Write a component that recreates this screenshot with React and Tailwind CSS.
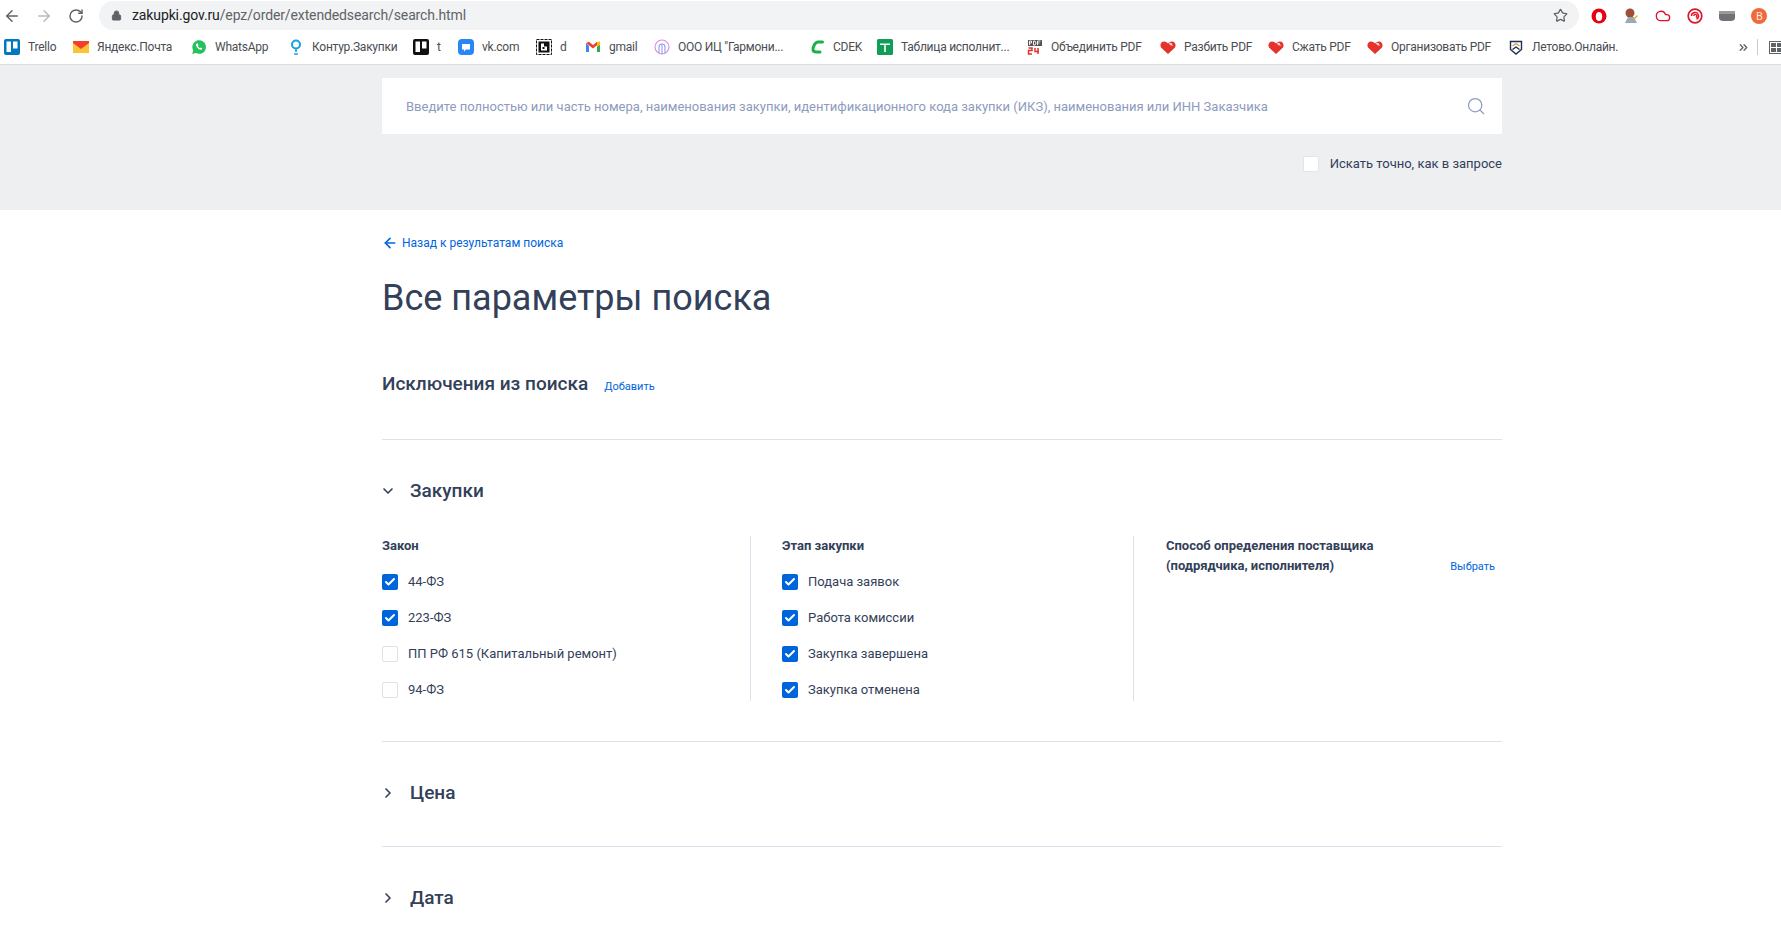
import React from 'react';
import { ArrowLeft, ArrowRight, RotateCw, Lock, Star, Search, ChevronDown, ChevronRight, Check, ChevronsRight, Cloud } from 'lucide-react';

// favicons of the bookmarks bar
const TrelloIcon = ({ bg = '#0079bf' }) => (
    <svg width="16" height="16" viewBox="0 0 16 16">
        <rect width="16" height="16" rx="2" fill={bg} />
        <rect x="2.5" y="2.5" width="4.5" height="10.5" fill="#fff" />
        <rect x="9" y="2.5" width="4.5" height="7" fill="#fff" />
    </svg>
);

const YandexMail = () => (
    <svg width="16" height="16" viewBox="0 0 16 16">
        <rect y="2" width="16" height="12" fill="#fcc433" />
        <path d="M0 2h16v2l-8 6-8-6z" fill="#f0402b" />
    </svg>
);

const WhatsApp = () => (
    <svg width="16" height="16" viewBox="0 0 16 16">
        <path d="M1.2 15l1-3.6A6.8 6.8 0 1 1 4.8 14z" fill="#25c15b" />
        <path d="M5.6 4.5c-1 .7-1 2 .2 3.6 1.2 1.7 2.8 2.9 4.3 2.6.8-.2 1.2-.8 1.1-1.4L9.8 8.4l-.8.8c-.8-.3-1.7-1.2-2.1-2.1l.7-.8-.8-1.8z" fill="#fff" />
    </svg>
);

const KonturIcon = () => (
    <svg width="16" height="16" viewBox="0 0 16 16" fill="none" stroke="#1a9fe0">
        <circle cx="8" cy="5.5" r="4" strokeWidth="2" />
        <path d="M8 10v3M6 15h4" strokeWidth="1.6" />
    </svg>
);

const VkChat = () => (
    <svg width="16" height="16" viewBox="0 0 16 16">
        <rect width="16" height="16" rx="4" fill="#2787f5" />
        <path d="M4 5h8v5.5H8l-2 2v-2H4z" fill="#fff" />
    </svg>
);

const DIcon = () => (
    <svg width="16" height="16" viewBox="0 0 16 16">
        <rect x="0.5" y="0.5" width="15" height="15" fill="#fff" stroke="#111" strokeDasharray="3 1" />
        <rect x="2.5" y="2.5" width="11" height="11" fill="#111" />
        <path d="M5 4.5h3v3h3v4H5z" fill="#fff" />
        <path d="M6.5 8h2v2h-2z" fill="#111" />
    </svg>
);

const Gmail = () => (
    <svg width="16" height="16" viewBox="0 0 16 16">
        <path d="M1 4v9h3V7z" fill="#4285f4" />
        <path d="M15 4v9h-3V7z" fill="#34a853" />
        <path d="M1 4l7 5.5L15 4l-3-1.2L8 6 4 2.8z" fill="#ea4335" />
        <path d="M12 3l3-.5V6l-3 2z" fill="#fbbc04" />
    </svg>
);

const GarmonyIcon = () => (
    <svg width="16" height="16" viewBox="0 0 16 16" fill="none" strokeWidth="1.1">
        <circle cx="8" cy="8" r="7" stroke="#d98be0" />
        <path d="M5 14V8a3 3 0 0 1 6 0v6" stroke="#8b9cf0" />
        <path d="M8 5v10" stroke="#8b9cf0" />
    </svg>
);

const Cdek = () => (
    <svg width="16" height="16" viewBox="0 0 16 16" fill="none">
        <path d="M13.5 3H9C6 3 4 8 4 10.5c0 2 1.500 2.500 3.500 2.500H11" stroke="#1ab248" strokeWidth="3" strokeLinecap="round" />
    </svg>
);

const SheetIcon = () => (
    <svg width="16" height="16" viewBox="0 0 16 16">
        <rect width="16" height="16" rx="1.500" fill="#0f9d58" />
        <path d="M3 4.500h10v1.500H8.800v7H7.200V6H3z" fill="#fff" />
    </svg>
);

const Pdf24 = () => (
    <svg width="16" height="16" viewBox="0 0 16 16">
        <rect x="1" y="1" width="14" height="6" fill="#555" />
        <path d="M2.500 6V2h2v2h-2M6.500 6V2h1.500l1 2-1 2zM10.500 6V2h3M10.500 4h2" fill="none" stroke="#fff" strokeWidth="0.9" />
        <path d="M1.500 9h3.500v2.500H1.500V15H5M8 9v3.500h4M11 9v6" fill="none" stroke="#e5322d" strokeWidth="1.500" />
    </svg>
);

const Heart = () => (
    <svg width="16" height="16" viewBox="0 0 16 16">
        <path d="M8 15L1 8.500C-.5 6 1 2.500 4 2.500c1.700 0 3 .8 4 2 1-1.200 2.300-2 4-2 3 0 4.500 3.500 3 6z" fill="#e5322d" />
        <path d="M8.500 3.500l3 .5 1.500 3-3-1z" fill="#fbd5d3" />
    </svg>
);

const LetovoIcon = () => (
    <svg width="16" height="16" viewBox="0 0 16 16" fill="none">
        <path d="M2.500 2.500h11v8L8 15l-5.500-4.500z" stroke="#1f2f4a" strokeWidth="1.400" />
        <path d="M4.500 7L8 4.500 11.500 7" stroke="#c9a24b" strokeWidth="1.400" />
        <path d="M4.500 10.500L8 8l3.500 2.500" stroke="#1f2f4a" strokeWidth="1.400" />
    </svg>
);

const bookmarks = [
    { icon: <TrelloIcon />, label: 'Trello', cls: 'w-[69px]' },
    { icon: <YandexMail />, label: 'Яндекс.Почта', cls: 'w-[118px]' },
    { icon: <WhatsApp />, label: 'WhatsApp', cls: 'w-[97px]' },
    { icon: <KonturIcon />, label: 'Контур.Закупки', cls: 'w-[125px]' },
    { icon: <TrelloIcon bg="#111" />, label: 't', cls: 'w-[45px]' },
    { icon: <VkChat />, label: 'vk.com', cls: 'w-[78px]' },
    { icon: <DIcon />, label: 'd', cls: 'w-[49px]' },
    { icon: <Gmail />, label: 'gmail', cls: 'w-[69px]' },
    { icon: <GarmonyIcon />, label: 'ООО ИЦ "Гармони...', cls: 'w-[155px]' },
    { icon: <Cdek />, label: 'CDEK', cls: 'w-[68px]' },
    { icon: <SheetIcon />, label: 'Таблица исполнит...', cls: 'w-[150px]' },
    { icon: <Pdf24 />, label: 'Объединить PDF', cls: 'w-[133px]' },
    { icon: <Heart />, label: 'Разбить PDF', cls: 'w-[108px]' },
    { icon: <Heart />, label: 'Сжать PDF', cls: 'w-[99px]' },
    { icon: <Heart />, label: 'Организовать PDF', cls: 'w-[141px]' },
    { icon: <LetovoIcon />, label: 'Летово.Онлайн.', cls: 'w-[120px]' },
];

const Extensions = () => (
    <div className="flex items-center gap-[16px] ml-[12px] w-[176px]">
        <svg width="16" height="16" viewBox="0 0 16 16">
            <circle cx="8" cy="8" r="7.500" fill="#e60012" />
            <ellipse cx="8" cy="8.500" rx="3.200" ry="4.500" fill="#fff" />
        </svg>
        <svg width="16" height="16" viewBox="0 0 16 16">
            <circle cx="7" cy="5" r="4.500" fill="#9c4f36" />
            <path d="M2 15l3-6h6l3 6z" fill="#9aa9b8" />
            <path d="M10 11l4-4 1 1-4 4z" fill="#e0b040" />
        </svg>
        <Cloud size={16} className="text-[#e60f2a]" strokeWidth={2} />
        <svg width="16" height="16" viewBox="0 0 16 16" fill="none" stroke="#e0162b">
            <circle cx="8" cy="8" r="6.800" strokeWidth="1.700" />
            <path d="M4.500 8a3.500 3.500 0 1 1 5 3.100M6.800 8a1.500 1.500 0 1 1 2 1.300" strokeWidth="1.400" />
        </svg>
        <svg width="16" height="16" viewBox="0 0 16 16">
            <path d="M0 3h16v3H0z" fill="#9a9a9a" />
            <path d="M0 6h16v4c0 2-2 3-4 3H4c-2 0-4-1-4-3z" fill="#6f7276" />
        </svg>
        <svg width="16" height="16" viewBox="0 0 16 16">
            <circle cx="8" cy="8" r="8" fill="#ee6a3d" />
            <text x="5" y="12" fontSize="11" fill="#ffe5dc" fontFamily="Roboto, sans-serif">B</text>
        </svg>
    </div>
);

const Checkbox = ({ checked }) =>
    checked ? (
        <span className="flex w-[16px] h-[16px] items-center justify-center rounded-[2px] bg-[#0065dd]">
            <Check size={12} strokeWidth={4} className="text-white" />
        </span>
    ) : (
        <span className="block w-[16px] h-[16px] rounded-[2px] bg-white border border-[#dfe3ea]" />
    );

const CheckRow = ({ label, checked }) => (
    <div className="flex items-center h-[36px] gap-[10px] text-[13px] text-[#334059]">
        <Checkbox checked={checked} />
        <span>{label}</span>
    </div>
);

const Collapsed = ({ title }) => (
    <div className="flex items-center h-[28px] mt-[37px]">
        <ChevronRight size={16} strokeWidth={2.500} className="text-[#334059] ml-[-2px] w-[16px]" />
        <span className="ml-[14px] mt-[1px] text-[19px] font-medium text-[#334059]">{title}</span>
    </div>
);

const App = () => {
    return (
        <div className="w-[1781px] h-[943px] overflow-hidden bg-white font-['Roboto',sans-serif]">
            {/* browser chrome */}
            <div className="flex items-center h-[31px]">
                <ArrowLeft size={18} strokeWidth={2} className="ml-[3px] text-[#5f6368]" />
                <ArrowRight size={18} strokeWidth={2} className="ml-[14px] text-[#b8babd]" />
                <RotateCw size={16} strokeWidth={2.200} className="ml-[15px] text-[#5f6368]" />
                <div className="flex items-center ml-[15px] w-[1480px] h-[29px] rounded-full bg-[#f1f3f4]">
                    <Lock size={11} fill="#5f6368" strokeWidth={2} className="ml-[12px] text-[#5f6368]" />
                    <span className="ml-[10px] text-[14px] text-[#5f6368] tracking-[-0.12px]"><span className="text-[#202124]">zakupki.gov.ru</span>/epz/order/extendedsearch/search.html</span>
                    <Star size={15} strokeWidth={2} className="ml-auto mr-[11px] text-[#5f6368]" />
                </div>
                <Extensions />
            </div>
            <div className="flex items-center h-[34px] pl-[4px] pb-[1px] border-b border-[#dadce0] overflow-hidden">
                {bookmarks.map((b) => (
                    <div key={b.label + b.cls} className={`flex items-center gap-[8px] shrink-0 ${b.cls}`}>
                        <span className="shrink-0 w-[16px] h-[16px]">{b.icon}</span>
                        <span className="text-[12px] tracking-[-0.25px] text-[#4a4d52] whitespace-nowrap">{b.label}</span>
                    </div>
                ))}
                <ChevronsRight size={13} strokeWidth={2.500} className="shrink-0 ml-[109px] text-[#5f6368]" />
                <span className="shrink-0 ml-[7px] w-px h-[16px] bg-[#c8cacd]" />
                <div className="ml-[11px] shrink-0 w-[14px] h-[13px] border border-[#5f6368] grid grid-cols-2 gap-px p-px">
                    <span className="bg-[#5f6368]" />
                    <span className="bg-[#5f6368]" />
                    <span className="bg-[#5f6368]" />
                    <span className="bg-[#5f6368]" />
                </div>
            </div>

            {/* search band */}
            <div className="h-[145px] bg-[#eeeff1] pl-[382px] pt-[13px]">
                <div className="flex items-center justify-between w-[1120px] h-[56px] bg-white pl-[24px] pr-[16px]">
                    <span className="mt-[2px] text-[13px] text-[#8d9bbd]">Введите полностью или часть номера, наименования закупки, идентификационного кода закупки (ИКЗ), наименования или ИНН Заказчика</span>
                    <Search size={20} strokeWidth={1.500} className="text-[#8d9bbd]" />
                </div>
                <div className="flex items-center justify-end w-[1120px] mt-[20px] gap-[11px] text-[13px] text-[#334059]">
                    <span className="block w-[16px] h-[16px] rounded-[2px] bg-white border border-[#e3e5ea]" />
                    <span>Искать точно, как в запросе</span>
                </div>
            </div>

            {/* form */}
            <div className="w-[1120px] ml-[382px] pt-[24px]">
                <div className="flex items-center h-[18px] text-[12px] text-[#0065dd]">
                    <ArrowLeft size={16} strokeWidth={2.500} />
                    <span className="ml-[4px]">Назад к результатам поиска</span>
                </div>
                <h1 className="mt-[24px] text-[36px] leading-[44px] text-[#334059]">Все параметры поиска</h1>
                <div className="flex items-center h-[28px] mt-[50px]">
                    <span className="mt-[1px] text-[19px] font-medium text-[#334059]">Исключения из поиска</span>
                    <span className="ml-[16px] mt-[7px] text-[11px] text-[#0065dd]">Добавить</span>
                </div>
                <div className="h-px mt-[41px] bg-[#dde3ec]" />

                <div className="flex items-center h-[28px] mt-[37px]">
                    <ChevronDown size={16} strokeWidth={2.500} className="text-[#334059] -ml-[2px]" />
                    <span className="ml-[14px] mt-[1px] text-[19px] font-medium text-[#334059]">Закупки</span>
                </div>
                <div className="grid grid-cols-[369px_383px_368px] grid-rows-[165px] mt-[31px]">
                    <div className="border-r border-[#dde3ec]">
                        <div className="text-[13px] leading-[20px] font-bold text-[#334059] mb-[8px]">Закон</div>
                        <CheckRow label="44-ФЗ" checked />
                        <CheckRow label="223-ФЗ" checked />
                        <CheckRow label="ПП РФ 615 (Капитальный ремонт)" />
                        <CheckRow label="94-ФЗ" />
                    </div>
                    <div className="pl-[31px] border-r border-[#dde3ec]">
                        <div className="text-[13px] leading-[20px] font-bold text-[#334059] mb-[8px]">Этап закупки</div>
                        <CheckRow label="Подача заявок" checked />
                        <CheckRow label="Работа комиссии" checked />
                        <CheckRow label="Закупка завершена" checked />
                        <CheckRow label="Закупка отменена" checked />
                    </div>
                    <div className="pl-[32px] pr-[7px] flex items-end justify-between self-start">
                        <div className="text-[13px] leading-[20px] font-bold text-[#334059]">Способ определения поставщика<br />(подрядчика, исполнителя)</div>
                        <span className="text-[11px] leading-[20px] -mb-[1px] text-[#0065dd]">Выбрать</span>
                    </div>
                </div>
                <div className="h-px mt-[40px] bg-[#dde3ec]" />
                <Collapsed title="Цена" />
                <div className="h-px mt-[39px] bg-[#dde3ec]" />
                <Collapsed title="Дата" />
            </div>
        </div>
    );
};

export default App;
